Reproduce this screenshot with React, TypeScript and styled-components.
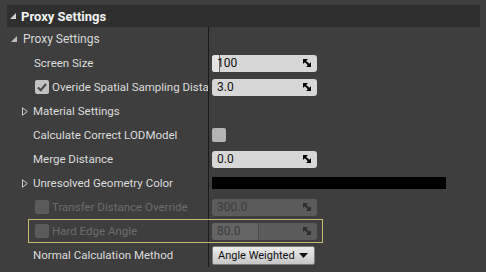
import React from "react";
import styled, { createGlobalStyle } from "styled-components";

const GlobalStyle = createGlobalStyle`
  html, body {
    margin: 0;
    padding: 0;
    background: #3e3e3e;
  }
  body {
    font-family: Roboto, "Liberation Sans", sans-serif;
    overflow: hidden;
  }
`;

const Page = styled.div`
  width: 486px;
  height: 272px;
  padding: 5px 6px 0 7px;
  box-sizing: border-box;
  overflow: hidden;
`;

const Header = styled.div`
  height: 22px;
  background: #2f2f2f;
  display: flex;
  align-items: center;
  gap: 5px;
  padding-left: 3px;
  color: #f4f4f4;
  font-weight: bold;
  font-size: 13px;
`;

const Row = styled.div`
  position: relative;
  display: grid;
  grid-template-columns: 202px 1fr;
  height: 24px;
`;

const LabelCell = styled.div<{ $indent: number; $disabled?: boolean; $gap?: number }>`
  box-sizing: border-box;
  min-width: 0;
  display: flex;
  align-items: center;
  gap: ${(p) => p.$gap ?? 3}px;
  padding-left: ${(p) => p.$indent}px;
  border-right: 1px solid #1b1b1b;
  overflow: hidden;
  white-space: nowrap;
  color: ${(p) => (p.$disabled ? "#6c6c6c" : "#dcdcdc")};
  font-size: 11.5px;
`;

const LabelText = styled.span`
  min-width: 0;
  overflow: hidden;
  white-space: nowrap;
`;

const ValueCell = styled.div`
  display: flex;
  align-items: center;
  padding-left: 3px;
`;

const Highlight = styled.div`
  position: absolute;
  left: 21px;
  top: 0;
  width: 295px;
  height: 24px;
  box-sizing: border-box;
  border: 1px solid #c4bd6f;
  pointer-events: none;
`;

const NumberBox = styled.div<{ $disabled?: boolean }>`
  position: relative;
  width: 105px;
  height: 17px;
  border-radius: 3px;
  overflow: hidden;
  background: ${(p) => (p.$disabled ? "#5b5b5b" : "#d7d7d7")};
  color: ${(p) => (p.$disabled ? "#3c3c3c" : "#111")};
  font-size: 12px;
  display: flex;
  align-items: center;
  justify-content: space-between;
  padding: 0 6px 0 5px;
  box-sizing: border-box;
`;

const Fill = styled.div<{ $disabled?: boolean }>`
  position: absolute;
  left: 0;
  top: 0;
  bottom: 0;
  background: ${(p) => (p.$disabled ? "#646464" : "#e4e4e4")};
  border-right: 1px solid ${(p) => (p.$disabled ? "#4c4c4c" : "#6e6e6e")};
`;

const BoxText = styled.span`
  position: relative;
`;

const Check = styled.div<{ $disabled?: boolean; $light?: boolean }>`
  flex: none;
  width: 14px;
  height: 14px;
  border-radius: 2px;
  background: ${(p) => (p.$disabled ? "#5b5b5b" : p.$light ? "#b4b4b4" : "#c2c2c2")};
  display: flex;
  align-items: center;
  justify-content: center;
`;

const ColorBar = styled.div`
  width: 234px;
  height: 12px;
  background: #000;
`;

const Dropdown = styled.div`
  width: 103px;
  height: 19px;
  box-sizing: border-box;
  border-radius: 2px;
  border: 1px solid #7a7a7a;
  background: linear-gradient(#ececec, #c6c6c6);
  display: flex;
  align-items: center;
  justify-content: space-between;
  padding: 0 6px 0 5px;
  color: #111;
  font-size: 11px;
  white-space: nowrap;
`;

const SubTitle = styled.span`
  font-size: 12px;
  color: #d8d8d8;
`;

const SpinIcon = ({ color }: { color: string }) => (
  <svg width="8" height="8" viewBox="0 0 8 8" style={{ position: "relative" }}>
    <path d="M0 0H5L0 5Z M8 8H3L8 3Z" fill={color} />
    <path d="M1 1L7 7" stroke={color} strokeWidth="2" />
  </svg>
);

const OpenTri = ({ color }: { color: string }) => (
  <svg width="6" height="6" viewBox="0 0 6 6" style={{ flex: "none" }}>
    <path d="M6 0V6H0Z" fill={color} />
  </svg>
);

const ClosedTri = () => (
  <svg width="6" height="9" viewBox="0 0 6 9" style={{ flex: "none" }}>
    <path d="M0.5 0.8L5.3 4.5L0.5 8.2Z" fill="none" stroke="#cfcfcf" strokeWidth="1" />
  </svg>
);

const CheckMark = () => (
  <svg width="12" height="12" viewBox="0 0 12 12">
    <path d="M2 6.5L4.8 9.2L10 3" fill="none" stroke="#4a4a4a" strokeWidth="2.2" />
  </svg>
);

const NumField = ({ value, disabled, fill }: { value: string; disabled?: boolean; fill?: number }) => (
  <NumberBox $disabled={disabled}>
    {fill ? <Fill $disabled={disabled} style={{ width: fill }} /> : null}
    <BoxText>{value}</BoxText>
    <SpinIcon color={disabled ? "#2e2e2e" : "#000"} />
  </NumberBox>
);

export default function App() {
  return (
    <>
      <GlobalStyle />
      <Page>
        <Header>
          <OpenTri color="#d0d0d0" />
          Proxy Settings
        </Header>

        <Row>
          <LabelCell $indent={4} $gap={6}>
            <OpenTri color="#bdbdbd" />
            <SubTitle>Proxy Settings</SubTitle>
          </LabelCell>
          <ValueCell />
        </Row>

        <Row>
          <LabelCell $indent={27}>Screen Size</LabelCell>
          <ValueCell>
            <NumField value="100" fill={7} />
          </ValueCell>
        </Row>

        <Row>
          <LabelCell $indent={28}>
            <Check>
              <CheckMark />
            </Check>
            <LabelText>Overide Spatial Sampling Distance</LabelText>
          </LabelCell>
          <ValueCell>
            <NumField value="3.0" />
          </ValueCell>
        </Row>

        <Row>
          <LabelCell $indent={15} $gap={5}>
            <ClosedTri />
            Material Settings
          </LabelCell>
          <ValueCell />
        </Row>

        <Row>
          <LabelCell $indent={26}>Calculate Correct LODModel</LabelCell>
          <ValueCell>
            <Check $light />
          </ValueCell>
        </Row>

        <Row>
          <LabelCell $indent={26}>Merge Distance</LabelCell>
          <ValueCell>
            <NumField value="0.0" />
          </ValueCell>
        </Row>

        <Row>
          <LabelCell $indent={15} $gap={5}>
            <ClosedTri />
            Unresolved Geometry Color
          </LabelCell>
          <ValueCell>
            <ColorBar />
          </ValueCell>
        </Row>

        <Row>
          <LabelCell $indent={28} $disabled>
            <Check $disabled />
            Transfer Distance Override
          </LabelCell>
          <ValueCell>
            <NumField value="300.0" disabled />
          </ValueCell>
        </Row>

        <Row>
          <LabelCell $indent={28} $disabled>
            <Check $disabled />
            Hard Edge Angle
          </LabelCell>
          <ValueCell>
            <NumField value="80.0" disabled fill={46} />
          </ValueCell>
          <Highlight />
        </Row>

        <Row>
          <LabelCell $indent={26}>Normal Calculation Method</LabelCell>
          <ValueCell>
            <Dropdown>
              Angle Weighted
              <svg width="9" height="5" viewBox="0 0 9 5" style={{ flex: "none" }}>
                <path d="M0 0H9L4.5 5Z" fill="#111" />
              </svg>
            </Dropdown>
          </ValueCell>
        </Row>
      </Page>
    </>
  );
}
